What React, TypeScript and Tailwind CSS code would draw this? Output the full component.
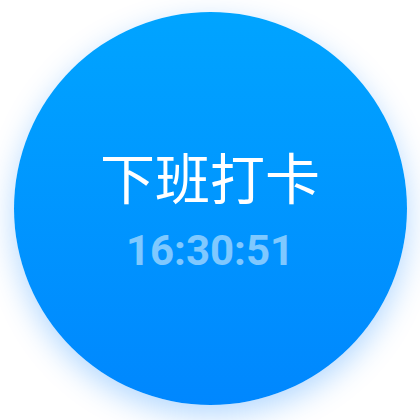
export default function App() {
  return (
    <div className="w-[420px] h-[420px] bg-white flex items-start justify-center pt-[12px]">
      <button
        className="
          w-[393px] h-[393px] rounded-full
          bg-gradient-to-b from-[#00a4ff] to-[#0087fe]
          shadow-[0_10px_30px_rgba(0,125,255,0.3)]
          flex flex-col items-center justify-center pt-[2px]
        "
      >
        <span className="font-['Noto_Sans_CJK_SC',sans-serif] text-white text-[55px] leading-[64px]">
          下班打卡
        </span>
        <span className="font-['Roboto',sans-serif] font-bold text-white/50 text-[42px] leading-[50px] mt-[19px]">
          16:30:51
        </span>
      </button>
    </div>
  );
}
